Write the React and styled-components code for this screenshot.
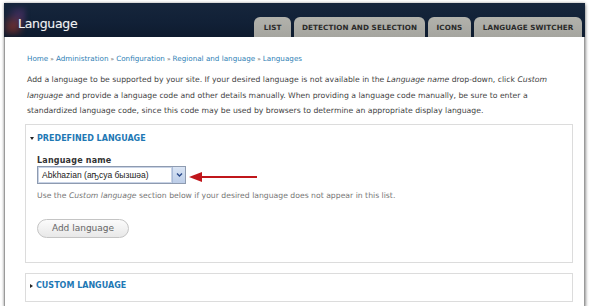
import React from "react";
import styled, { createGlobalStyle } from "styled-components";

const Global = createGlobalStyle`
  html, body { margin: 0; padding: 0; background: #ffffff; }
  body { font-family: "DejaVu Sans", Verdana, sans-serif; }
`;

const Frame = styled.div`
  margin: 3px 0 0 4px;
  width: 581px;
  box-shadow: 0 0 3px rgba(0,0,0,0.35), 1px 2px 3px rgba(0,0,0,0.25);
  background: #fff;
`;

const Header = styled.div`
  height: 34px;
  background: linear-gradient(180deg, #16263c 0%, #112036 60%, #0e1b2e 100%);
  display: flex;
  align-items: flex-end;
  justify-content: space-between;
  position: relative;
  overflow: hidden;
`;

const Logo = styled.div`
  position: absolute;
  left: 0;
  top: 4px;
  width: 22px;
  height: 28px;
  background: radial-gradient(circle at 40% 70%, rgba(190,60,40,0.55), transparent 55%),
    radial-gradient(circle at 70% 30%, rgba(120,60,140,0.45), transparent 55%);
  filter: blur(2px);
`;

const Title = styled.div`
  color: #f2f2f2;
  font-family: "DejaVu Sans", Verdana, sans-serif;
  font-size: 12.5px;
  letter-spacing: -0.3px;
  padding: 0 0 6px 14px;
  position: relative;
  text-shadow: 0 0 1px rgba(255,255,255,0.3);
`;

const Tabs = styled.div`
  display: flex;
  gap: 3px;
  padding-right: 3px;
`;

const Tab = styled.div`
  height: 20px;
  padding: 0 ${(p) => p.$pad}px;
  background: linear-gradient(180deg, #b2b2ac 0%, #a5a59f 100%);
  border-radius: 6px 6px 0 0;
  display: flex;
  align-items: center;
  font-family: "DejaVu Sans", Verdana, sans-serif;
  font-weight: bold;
  font-size: 7.2px;
  color: #2a2a2a;
  letter-spacing: 0.1px;
`;

const Content = styled.div`
  border: 1px solid #9a9a9a;
  border-top: none;
  padding: 16px 11px 2px 20px;
`;

const Crumbs = styled.div`
  font-size: 7.2px;
  color: #2f7fb5;
  padding-left: 2px;
  line-height: 12px;
`;

const Sep = styled.span`
  color: #444;
  margin: 0 2px;
  font-size: 6px;
`;

const Intro = styled.p`
  margin: 7px 0 5px;
  padding-left: 2px;
  font-size: 7.72px;
  line-height: 15.5px;
  color: #444;
`;

const Box = styled.div`
  border: 1px solid #dcdcdc;
  margin-bottom: ${(p) => (p.$open ? "10px" : "2px")};
  padding: ${(p) => (p.$open ? "8px 11px 24px" : "6px 4px 9px")};
`;

const Legend = styled.div`
  display: flex;
  align-items: center;
  gap: 2px;
  font-size: 8px;
  font-weight: bold;
  color: #1e78b4;
  margin-left: ${(p) => (p.$open ? "-7px" : "0")};
  line-height: 12px;
`;

const Label = styled.div`
  font-size: 8px;
  font-weight: bold;
  color: #333;
  margin-top: 10px;
  letter-spacing: 0.2px;
  line-height: 11px;
`;

const SelectRow = styled.div`
  display: flex;
  align-items: center;
`;

const Select = styled.div`
  width: 149px;
  height: 18px;
  border: 1px solid #8e9bb0;
  display: flex;
  align-items: stretch;
  background: #fff;
  box-sizing: border-box;
`;

const SelectText = styled.div`
  flex: 1;
  font-family: "Liberation Sans", Arial, sans-serif;
  font-size: 8.5px;
  color: #222;
  display: flex;
  align-items: center;
  padding-left: 3px;
  border: 1px solid #c8d3e6;
`;

const SelectBtn = styled.div`
  width: 12px;
  background: linear-gradient(180deg, #d9e4f4 0%, #bccde8 100%);
  border-left: 1px solid #a9bbd8;
  display: flex;
  align-items: center;
  justify-content: center;
`;

const Help = styled.div`
  font-size: 7.7px;
  color: #777;
  margin-top: 6px;
  line-height: 12px;
`;

const Button = styled.div`
  margin-top: 17px;
  width: 92px;
  height: 19px;
  box-sizing: border-box;
  border: 1px solid #c4c4c4;
  border-radius: 10px;
  background: linear-gradient(180deg, #fbfbfb 0%, #e8e8e8 100%);
  display: flex;
  align-items: center;
  justify-content: center;
  font-size: 9px;
  color: #666;
`;

const Tri = styled.span`
  display: inline-block;
  width: 0;
  height: 0;
  ${(p) =>
    p.$down
      ? "border-left: 2.5px solid transparent; border-right: 2.5px solid transparent; border-top: 3px solid #222;"
      : "border-top: 2.5px solid transparent; border-bottom: 2.5px solid transparent; border-left: 3px solid #222;"}
  margin-right: 1px;
`;

export default function App() {
  return (
    <>
      <Global />
      <Frame>
        <Header>
          <Logo />
          <Title>Language</Title>
          <Tabs>
            <Tab $pad={10}>LIST</Tab>
            <Tab $pad={7.5}>DETECTION AND SELECTION</Tab>
            <Tab $pad={9}>ICONS</Tab>
            <Tab $pad={8.5}>LANGUAGE SWITCHER</Tab>
          </Tabs>
        </Header>
        <Content>
          <Crumbs>
            Home<Sep>»</Sep>Administration<Sep>»</Sep>Configuration<Sep>»</Sep>Regional and language<Sep>»</Sep>Languages
          </Crumbs>
          <Intro>
            Add a language to be supported by your site. If your desired language is not available in the <i>Language name</i> drop-down, click <i>Custom </i><i>language</i> and provide a language code and other details manually. When providing a language code manually, be sure to enter a standardized language code, since this code may be used by browsers to determine an appropriate display language.
          </Intro>
          <Box $open>
            <Legend $open>
              <Tri $down />
              PREDEFINED LANGUAGE
            </Legend>
            <Label>Language name</Label>
            <SelectRow>
              <Select>
                <SelectText>Abkhazian (аҧсуа бызшәа)</SelectText>
                <SelectBtn>
                  <svg width="7" height="6" viewBox="0 0 7 6">
                    <path d="M1 1.5 L3.5 4 L6 1.5" fill="none" stroke="#2a4a8a" strokeWidth="1.4" />
                  </svg>
                </SelectBtn>
              </Select>
              <svg width="70" height="12" viewBox="0 0 70 12" style={{ marginLeft: 3, marginTop: 5 }}>
                <line x1="10" y1="6" x2="68" y2="6" stroke="#c0161b" strokeWidth="2.2" />
                <polygon points="0,6 13,1 13,11" fill="#c0161b" />
              </svg>
            </SelectRow>
            <Help>
              Use the <i>Custom language</i> section below if your desired language does not appear in this list.
            </Help>
            <Button>Add language</Button>
          </Box>
          <Box>
            <Legend>
              <Tri />
              CUSTOM LANGUAGE
            </Legend>
          </Box>
        </Content>
      </Frame>
    </>
  );
}
